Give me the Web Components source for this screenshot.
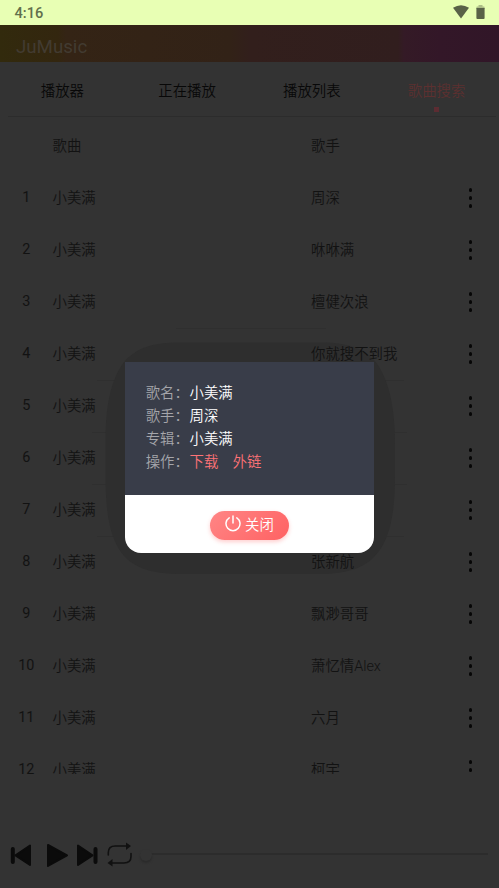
<!DOCTYPE html>
<html lang="zh-CN"><head><meta charset="utf-8"><title>JuMusic</title>
<style>html,body{margin:0;background:#333}body{font-family:Roboto,"Noto Sans CJK SC",sans-serif}</style></head>
<body><ju-app></ju-app>
<script>
const define=(name,css,html)=>customElements.define(name,class extends HTMLElement{
  constructor(){super();this.attachShadow({mode:'open'}).innerHTML='<style>*{box-sizing:border-box}'+css+'</style>'+(typeof html==='function'?html(this):html);}
});
define('status-bar',`:host{display:flex;height:25px;background:#e8ffb4;color:#62704c;font:500 14.6px/26px Roboto,sans-serif;padding:0 14.500px 0 14.5px;justify-content:space-between}
 div{display:flex;gap:7px;padding-top:5px}svg{display:block}`,
`<span>4:16</span><div><svg width="16" height="14" viewBox="0 0 16 14"><path fill="#596247" d="M0 2.8Q8-2.4 16 2.8L8 13.5Z"/></svg>
<svg width="9" height="14" viewBox="0 0 9 14"><path fill="#aebf87" d="M2.5 0h4v1.5H8q.6 0 .6.7V4H.4V2.2q0-.7.6-.7h1.5z"/><path fill="#596247" d="M.4 3h8.2v10q0 .9-.9.9H1.300q-.9 0-.9-.9z"/></svg></div>`);
define('app-title',`:host{display:block;height:37px;padding-left:16px;font:400 18.7px/44px Roboto,sans-serif;color:#423b31;background:linear-gradient(90deg,#322a0d 0,#33260f 58px,#342415 66px,#322217 230px,#321f1c 250px,#311e1e 398px,#341a26 404px,#331728 440px,#311628 499px)}`,'<slot></slot>');
define('tab-item',`:host{display:flex;flex:1;flex-direction:column;align-items:center;font-size:14.4px;line-height:20px;color:#080808;padding-top:20px}
 :host([active]){color:#5c3030}i{width:5px;height:5px;margin-top:5px}:host([active]) i{background:#5c2c32}`,'<span><slot></slot></span><i></i>');
define('tab-bar',`:host{display:flex;height:55px;position:relative}hr{position:absolute;left:8px;right:3px;bottom:0;height:1px;margin:0;border:0;background:#2c2c2c}`,'<slot></slot><hr>');
define('song-row',`:host{display:grid;grid-template-columns:52.5px 258.5px 1fr 57px;height:52px;align-items:center;font-size:14.4px;color:#121212}
 span{line-height:22px}.s{padding-top:4px}.n{text-align:center;font-weight:400;padding-top:2px}.m{display:flex;flex-direction:column;align-items:center;gap:4.400px;padding-top:2px}i{width:3.600px;height:3.600px;border-radius:50%;background:#060606}`,
 e=>`<span class="n">${e.getAttribute('no')||''}</span><span class="s">${e.getAttribute('song')}</span><span class="s">${e.getAttribute('singer')}</span><span class="m">${e.getAttribute('no')?'<i></i><i></i><i></i>':''}</span>`);
define('song-list',`:host{display:block;height:657px;padding-top:2px;overflow:hidden}`,()=>{
 const s=['周深','咻咻满','檀健次浪','你就搜不到我','','','','张新航','飘渺哥哥','萧忆情Alex','六月','柯宇'];
 return '<song-row song="歌曲" singer="歌手"></song-row>'+s.map((v,i)=>`<song-row no="${i+1}" song="小美满" singer="${v}"></song-row>`).join('');});
define('player-bar',`:host{display:flex;height:66px;margin-top:48px;align-items:center;padding-left:8px}svg{display:block}
 .t{flex:1;height:12px;margin-right:11px;position:relative;display:flex;align-items:center}.t:before{content:"";height:2px;width:100%;margin-top:-2px;background:#2c2c2c}.t b{position:absolute;left:0;width:12px;height:12px;border-radius:50%;background:#333;box-shadow:0 2px 2px #2b2b2b}`,
`<svg width="132" height="32" viewBox="8 839 132 32"><g fill="#0b0b0b" stroke="#0b0b0b" stroke-width="2" stroke-linejoin="round"><path d="M30 845.500v19.500L15.500 855.300z"/><path d="M48 845l19 10.300L48 866z"/><path d="M78 845.500v19.500L92.500 855.300z"/><path stroke-width="4" stroke-linecap="round" d="M12.800 849v13M95.500 849v13"/></g><g fill="none" stroke="#111" stroke-width="1.600" stroke-linecap="round" stroke-linejoin="round"><path d="M108.300 855v-2.500q0-6.500 7-6.500h12"/><path d="M131 853.500v3q0 6.500-7 6.500h-13"/></g><path fill="#111" d="M126 842.500l5 3.500-5 4zM112.500 859l-5 4 5 3.500z"/></svg><div class="t"><b></b></div>`);
define('close-button',`:host{display:flex;width:79px;height:29px;border-radius:15px;background:linear-gradient(135deg,#ff8585,#ff6263);box-shadow:0 2px 4px #ff6b6b55;color:#fff;font-size:14.4px;align-items:center;justify-content:center;gap:4px;padding-bottom:4px}svg{display:block}`,
`<svg width="16" height="17" viewBox="0 0 16 17" fill="none" stroke="#fff" stroke-width="1.500" stroke-linecap="round"><path d="M4.200 2.800A7 7 0 1 0 11.800 2.800M8 1v7"/></svg><slot></slot>`);
define('info-line',`:host{display:flex;height:22.900px;align-items:center;font-size:14.4px;color:#a5a6ab;white-space:nowrap}span{width:43.800px}.v{width:auto;color:#fff;display:flex;gap:14.400px}`,e=>`<span>${e.getAttribute('label')}：</span><span class="v"><slot></slot></span>`);
define('song-dialog',`:host{position:absolute;left:125px;top:362px;width:249px;height:191px;border-radius:0 0 16px 16px;overflow:hidden;background:#fff}
 .i{height:133px;background:#393d49;padding:18px 20.700px}.f{display:flex;justify-content:center;padding-top:16px}a{color:#ff7377}`,
`<div class="i"><info-line label="歌名">小美满</info-line><info-line label="歌手">周深</info-line><info-line label="专辑">小美满</info-line><info-line label="操作"><a>下载</a><a>外链</a></info-line></div><div class="f"><close-button>关闭</close-button></div>`);
define('dialog-halo',`:host{position:absolute;inset:0;overflow:hidden}svg{display:block}`,
`<svg width="499" height="888"><path d="M176 328.500h150M97 380.500h307M92 432.500h315M92 484.500h315M97 536.500h307" stroke="#2f2f2f"/><path fill="#2e2e2e" d="M180 342.500H320C352 342.500 371 350 382 372C392 392 395 418 395 445V475C395 510 391 540 374 557C362 569 345 574 318 574H182C154 574 137 569 125 557C109 540 105.500 510 105.500 475V440C105.500 412 109 382 124 362C137 347 154 342.500 180 342.500Z"/></svg>`);
define('ju-app',`:host{display:block;position:relative;width:499px;height:888px;overflow:hidden;background:#333}song-list{position:relative;z-index:1}song-dialog{z-index:2}tab-bar,song-list,player-bar,song-dialog{font-weight:350}`,
`<status-bar></status-bar><app-title>JuMusic</app-title><tab-bar><tab-item>播放器</tab-item><tab-item>正在播放</tab-item><tab-item>播放列表</tab-item><tab-item active>歌曲搜索</tab-item></tab-bar><dialog-halo></dialog-halo><song-list></song-list><player-bar></player-bar><song-dialog></song-dialog>`);
</script></body></html>
